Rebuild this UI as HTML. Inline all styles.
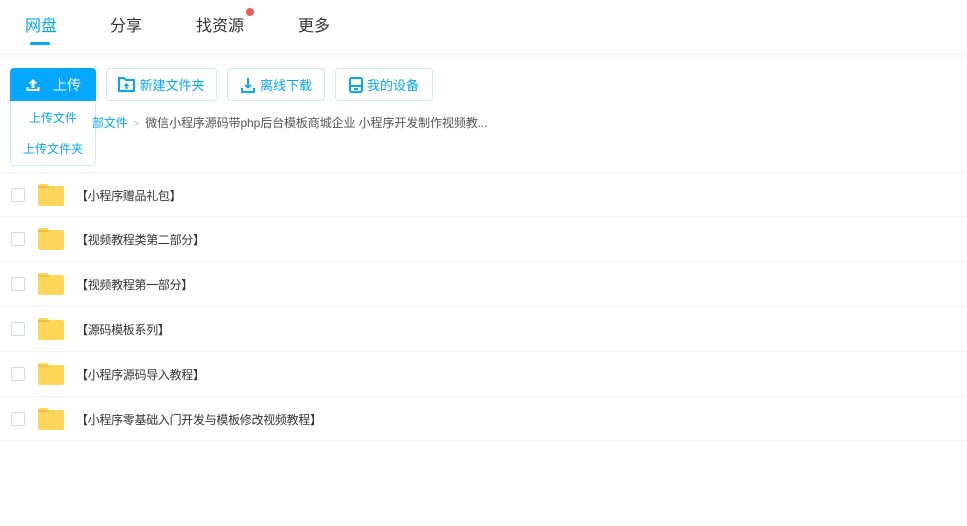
<!DOCTYPE html><html><head><meta charset="utf-8"><style>
*{margin:0;padding:0;box-sizing:border-box}
body{width:967px;height:526px;background:#fff;font-family:"Liberation Sans","Noto Sans CJK SC",sans-serif;position:relative;overflow:hidden;color:#333}
.hd{position:absolute;left:0;top:0;width:967px;height:53px;background:#fff;box-shadow:0 2px 6px rgba(0,0,0,.06)}
.tab{position:absolute;top:12px;font-size:16px;color:#333}
.btn{position:absolute;top:68px;height:33px;border:1px solid #c8e9fb;border-radius:4px;color:#06a7ff;font-size:13px;display:flex;align-items:center;justify-content:center;gap:4px;background:#fff}
.row{position:absolute;left:0;width:967px;height:45px;border-top:1px solid #f0f4f8}
.cb{position:absolute;left:11px;top:15px;width:14px;height:14px;border:1px solid #d4d9df;border-radius:2px}
.fd{position:absolute;left:38px;top:11px;width:26px;height:22px}
.nm{position:absolute;left:76px;top:14px;font-size:12px;color:#333;letter-spacing:-0.3px}
</style></head><body>
<div class="hd">
<div class="tab" style="left:25px;color:#06a7ff">网盘</div>
<div style="position:absolute;left:30px;top:42px;width:20px;height:3px;border-radius:2px;background:#06a7ff"></div>
<div class="tab" style="left:110px">分享</div>
<div class="tab" style="left:196px">找资源</div>
<div style="position:absolute;left:246px;top:8px;width:8px;height:8px;border-radius:50%;background:#f25a5a"></div>
<div class="tab" style="left:298px">更多</div>
</div>
<div class="btn" style="left:10px;width:86px;background:#06a7ff;border-color:#06a7ff;color:#fff;font-size:14px;border-radius:4px 4px 0 0;gap:12px">
<svg width="16" height="16" viewBox="0 0 16 16"><path d="M8 2L3.5 6.5h3V11h3V6.5h3z M1.5 10v4h13v-4h-2v2h-9v-2z" fill="#fff"/></svg>上传</div>
<div style="position:absolute;left:10px;top:101px;width:86px;height:65px;border:1px solid #c8e9fb;border-top:none;border-radius:0 0 4px 4px;background:#fff;font-size:12px;color:#06a7ff;text-align:center">
<div style="margin-top:8px">上传文件</div><div style="margin-top:14px">上传文件夹</div></div>
<div class="btn" style="left:106px;width:111px"><svg width="17" height="15" viewBox="0 0 17 15"><path d="M1 1h5l2 2h8v11H1z" fill="none" stroke="#06a7ff" stroke-width="2"/><path d="M8.5 6l-3 3h2v3h2V9h2z" fill="#06a7ff"/></svg>新建文件夹</div>
<div class="btn" style="left:227px;width:98px"><svg width="16" height="16" viewBox="0 0 16 16"><path d="M7 1h2v7h3l-4 4-4-4h3z M1 11h2v3h10v-3h2v5H1z" fill="#06a7ff"/></svg>离线下载</div>
<div class="btn" style="left:335px;width:98px"><svg width="14" height="16" viewBox="0 0 14 16"><rect x="1" y="1" width="12" height="14" rx="1.5" fill="none" stroke="#06a7ff" stroke-width="2"/><path d="M1 9h12" stroke="#06a7ff" stroke-width="2"/><rect x="5" y="11" width="4" height="2" fill="#06a7ff"/></svg>我的设备</div>
<div style="position:absolute;left:92px;top:114px;font-size:12px;color:#06a7ff;letter-spacing:-0.1px">部文件 <span style="color:#bbb;font-size:10px">&nbsp;&gt;&nbsp;</span> <span style="color:#555">微信小程序源码带php后台模板商城企业 小程序开发制作视频教...</span></div>
<div class="row" style="top:172px"><div class="cb"></div><svg class="fd" viewBox="0 0 26 22"><path d="M0 2a2 2 0 0 1 2-2h7l2 2h13a2 2 0 0 1 2 2v16a2 2 0 0 1-2 2H2a2 2 0 0 1-2-2z" fill="#ffd659"/><path d="M0 3h11" stroke="#f0c040" stroke-width="2"/></svg><div class="nm">【小程序赠品礼包】</div></div>
<div class="row" style="top:216px"><div class="cb"></div><svg class="fd" viewBox="0 0 26 22"><path d="M0 2a2 2 0 0 1 2-2h7l2 2h13a2 2 0 0 1 2 2v16a2 2 0 0 1-2 2H2a2 2 0 0 1-2-2z" fill="#ffd659"/><path d="M0 3h11" stroke="#f0c040" stroke-width="2"/></svg><div class="nm">【视频教程类第二部分】</div></div>
<div class="row" style="top:261px"><div class="cb"></div><svg class="fd" viewBox="0 0 26 22"><path d="M0 2a2 2 0 0 1 2-2h7l2 2h13a2 2 0 0 1 2 2v16a2 2 0 0 1-2 2H2a2 2 0 0 1-2-2z" fill="#ffd659"/><path d="M0 3h11" stroke="#f0c040" stroke-width="2"/></svg><div class="nm">【视频教程第一部分】</div></div>
<div class="row" style="top:306px"><div class="cb"></div><svg class="fd" viewBox="0 0 26 22"><path d="M0 2a2 2 0 0 1 2-2h7l2 2h13a2 2 0 0 1 2 2v16a2 2 0 0 1-2 2H2a2 2 0 0 1-2-2z" fill="#ffd659"/><path d="M0 3h11" stroke="#f0c040" stroke-width="2"/></svg><div class="nm">【源码模板系列】</div></div>
<div class="row" style="top:351px"><div class="cb"></div><svg class="fd" viewBox="0 0 26 22"><path d="M0 2a2 2 0 0 1 2-2h7l2 2h13a2 2 0 0 1 2 2v16a2 2 0 0 1-2 2H2a2 2 0 0 1-2-2z" fill="#ffd659"/><path d="M0 3h11" stroke="#f0c040" stroke-width="2"/></svg><div class="nm">【小程序源码导入教程】</div></div>
<div class="row" style="top:396px;border-bottom:1px solid #f0f4f8"><div class="cb"></div><svg class="fd" viewBox="0 0 26 22"><path d="M0 2a2 2 0 0 1 2-2h7l2 2h13a2 2 0 0 1 2 2v16a2 2 0 0 1-2 2H2a2 2 0 0 1-2-2z" fill="#ffd659"/><path d="M0 3h11" stroke="#f0c040" stroke-width="2"/></svg><div class="nm">【小程序零基础入门开发与模板修改视频教程】</div></div>
</body></html>
